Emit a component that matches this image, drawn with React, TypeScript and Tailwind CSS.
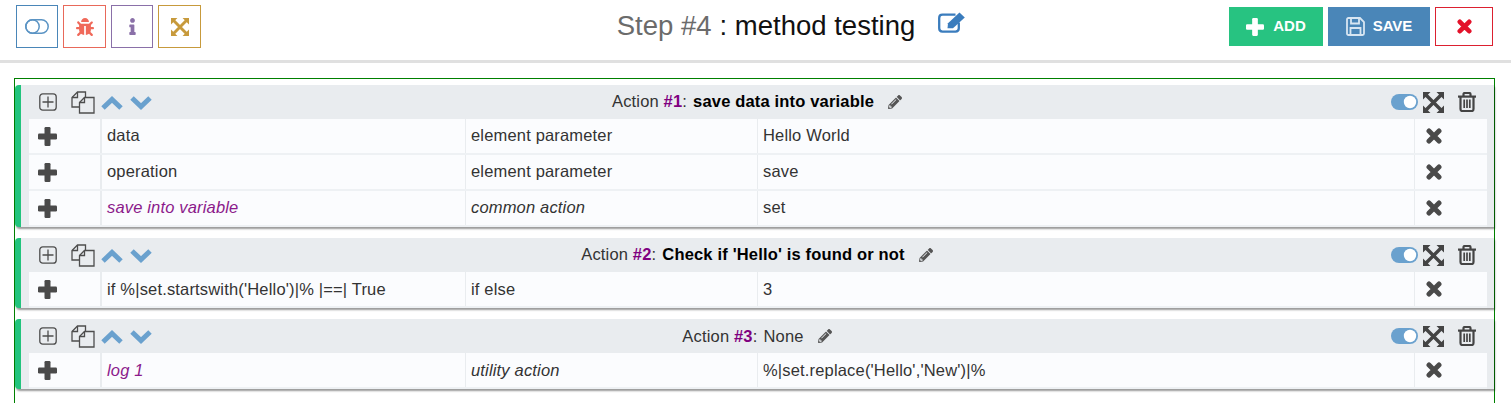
import React from 'react';
import { FaBug, FaInfo, FaPencilAlt } from 'react-icons/fa';

type Row = { name: string; kind: string; value: string; italic?: boolean };

interface ActionData {
    num: number;
    title: string;
    bold: boolean;
    rows: Row[];
}

const actions: ActionData[] = [
    {
        num: 1,
        title: 'save data into variable',
        bold: true,
        rows: [
            { name: 'data', kind: 'element parameter', value: 'Hello World' },
            { name: 'operation', kind: 'element parameter', value: 'save' },
            { name: 'save into variable', kind: 'common action', value: 'set', italic: true },
        ],
    },
    {
        num: 2,
        title: "Check if 'Hello' is found or not",
        bold: true,
        rows: [{ name: "if %|set.startswith('Hello')|% |==| True", kind: 'if else', value: '3' }],
    },
    {
        num: 3,
        title: 'None',
        bold: false,
        rows: [{ name: 'log 1', kind: 'utility action', value: "%|set.replace('Hello','New')|%", italic: true }],
    },
];

const ToggleOutline = () => (
    <svg width="24" height="15" viewBox="0 0 24 15" fill="none" stroke="#5b94c4" strokeWidth="1.5">
        <rect x="0.8" y="0.8" width="22.4" height="13.4" rx="6.7" />
        <circle cx="7.5" cy="7.5" r="6.7" />
    </svg>
);

const Toggle = () => (
    <svg width="27" height="16" viewBox="0 0 27 16">
        <rect x="0" y="0" width="27" height="16" rx="8" fill="#6aa1ce" />
        <circle cx="19" cy="8" r="6.2" fill="#fff" />
    </svg>
);

const AddBox = () => (
    <svg width="18" height="18" viewBox="0 0 18 18" fill="none" stroke="#4d4d4d" strokeWidth="1.3">
        <rect x="0.8" y="0.8" width="16.4" height="16.4" rx="3" />
        <path d="M9 3.5v11M3.5 9h11" />
    </svg>
);

const CopyDocs = () => (
    <svg width="24" height="23" viewBox="0 0 24 23" fill="none" stroke="#4d4d4d" strokeWidth="1.3">
        <path d="M14.5 6V1H6.5L1 6.5V16H8" />
        <path d="M6.5 1v5.5H1" />
        <path d="M23 6.5H13.5L8.5 11.5V22H23Z" fill="#e9ecef" />
        <path d="M13.5 6.5v5h-5" />
    </svg>
);

const Chevron = ({ up }: { up?: boolean }) => (
    <svg width="22" height="14" viewBox="0 0 22 14" fill="none" stroke="#6aa1ce" strokeWidth="5">
        <path d={up ? 'M2 12L11 3.5L20 12' : 'M2 2L11 10.5L20 2'} />
    </svg>
);

const PlusIcon = ({ size = 19, color = '#4a4a4a' }: { size?: number; color?: string }) => (
    <svg width={size} height={size} viewBox="0 0 19 19" fill={color}>
        <rect x="6.5" y="0" width="6" height="19" rx="1.2" />
        <rect x="0" y="6.5" width="19" height="6" rx="1.2" />
    </svg>
);

const CrossIcon = ({ size = 16, color = '#4a4a4a' }: { size?: number; color?: string }) => (
    <svg width={size} height={size} viewBox="0 0 16 16" stroke={color} strokeWidth="5" strokeLinecap="round">
        <path d="M3 3L13 13M13 3L3 13" />
    </svg>
);

const ExpandIcon = ({ size = 21, color = '#444' }: { size?: number; color?: string }) => (
    <svg width={size} height={size} viewBox="0 0 21 21" fill={color}>
        <path d="M0 0H7.5L0 7.5ZM21 0V7.5L13.5 0ZM0 21V13.5L7.5 21ZM21 21H13.5L21 13.5Z" />
        <path d="M3 3L18 18M18 3L3 18" stroke={color} strokeWidth="3.4" />
    </svg>
);

const TrashIcon = () => (
    <svg width="18" height="20" viewBox="0 0 18 20" fill="none" stroke="#444" strokeWidth="2.2">
        <path d="M0 4.6H18" />
        <path d="M5.5 4V2.2C5.5 1.5 6 1 6.7 1H11.3C12 1 12.5 1.5 12.5 2.2V4" />
        <path d="M2.5 4.5V17C2.5 18.2 3.2 19 4.2 19H13.8C14.8 19 15.5 18.2 15.5 17V4.5" />
        <path d="M6.2 7.5V16M9 7.5V16M11.8 7.5V16" strokeWidth="1.7" />
    </svg>
);

const SaveIcon = () => (
    <svg width="19" height="19" viewBox="0 0 19 19" fill="none" stroke="#d8e6f2" strokeWidth="1.8">
        <path d="M1 2.5C1 1.6 1.6 1 2.5 1H14L18 5V16.5C18 17.4 17.4 18 16.5 18H2.5C1.6 18 1 17.4 1 16.5Z" />
        <path d="M5 1.5V6.5H13V1.5" />
        <path d="M4.5 18V11H14.5V18" />
    </svg>
);

const EditIcon = () => (
    <svg width="28" height="22" viewBox="0 0 28 22" fill="none">
        <path d="M17.5 3.6H4.5C2.6 3.6 1.2 5 1.2 6.9V17.3C1.2 19.2 2.6 20.6 4.5 20.6H17.5C19.4 20.6 20.8 19.2 20.8 17.3V11.5" stroke="#3a7cbd" strokeWidth="2.3" />
        <path d="M9.5 17.2L10 12.3L21.5 1.6L26.8 6.4L15 17.2Z" fill="#3a7cbd" />
    </svg>
);

const TopButton = ({ className, children }: { className: string; children: React.ReactNode }) => (
    <div className={`h-[43px] border flex items-center justify-center ${className}`}>{children}</div>
);

const ActionCard = ({ action }: { action: ActionData }) => {
    // text baselines differ by a pixel between the cards in the picture
    const rowNudge = action.num === 1 ? 'pb-[1px]' : '';
    const titleNudge = action.num === 3 ? '' : 'pb-[1px]';
    return (
        <div className="rounded-l-[4px] border-l-[6px] border-[#22c47d] bg-[#e9ecef] shadow-[1px_2px_2px_rgba(0,0,0,0.4)] pr-[7px]">
            <div className="h-[34px] flex items-center">
                <div className="flex items-center ml-[18px] w-[120px] shrink-0">
                    <AddBox />
                    <span className="ml-[14px]"><CopyDocs /></span>
                    <span className="ml-[6px] mt-[1px]"><Chevron up /></span>
                    <span className="ml-[7px] mt-[1px]"><Chevron /></span>
                </div>
                <div className={`flex-1 flex items-center justify-center text-[16.5px] tracking-[0.17px] text-[#333] pr-[36px] ${titleNudge}`}>
                    <span>Action <b className="text-[#800080]">#{action.num}</b>:</span>
                    <span className={`ml-[6px] ${action.bold ? 'font-bold text-black' : ''}`}>{action.title}</span>
                    <FaPencilAlt className="ml-[14px] text-[#555]" size={14} />
                </div>
                <div className="flex items-center w-[96px] shrink-0">
                    <Toggle />
                    <span className="ml-[5px]"><ExpandIcon /></span>
                    <span className="ml-[14px]"><TrashIcon /></span>
                </div>
            </div>
            <div className="ml-[8px] bg-[#fbfcfe]">
                {action.rows.map((row, i) => (
                    <div key={i} className="h-[36px] grid grid-cols-[73px_364px_292px_657px_72px] items-stretch text-[16.5px] tracking-[0.17px] text-[#333] border-b-2 border-[#eef1f4]">
                        <div className="flex items-center pl-[9px] border-r-2 border-[#e9ecef]">
                            <PlusIcon />
                        </div>
                        <div className={`flex items-center pl-[5px] border-r border-[#e9ecef] ${rowNudge} ${row.italic ? 'italic text-[#8b1a8b]' : ''}`}>{row.name}</div>
                        <div className={`flex items-center pl-[5px] border-r border-[#e9ecef] ${rowNudge} ${row.italic ? 'italic' : ''}`}>{row.kind}</div>
                        <div className={`flex items-center pl-[5px] border-r border-[#e9ecef] ${rowNudge}`}>{row.value}</div>
                        <div className="flex items-center pl-[11px]">
                            <CrossIcon />
                        </div>
                    </div>
                ))}
            </div>
        </div>
    );
};

export default function App() {
    return (
        <div className="w-[1511px] h-[403px] overflow-hidden bg-white font-['Liberation_Sans',Arial,sans-serif]">
            <header className="h-[63px] border-b-[3px] border-[#e0e0e0] flex items-start">
                <div className="flex items-center gap-[5px] pl-[16px] pt-[5px] w-[385px]">
                    <TopButton className="w-[42px] border-[#4a86b8]"><ToggleOutline /></TopButton>
                    <TopButton className="w-[43px] border-[#e8695a]"><FaBug className="text-[#f0695a]" size={18} /></TopButton>
                    <TopButton className="w-[42px] border-[#8a70a8]"><FaInfo className="text-[#8a70a8]" size={17} /></TopButton>
                    <TopButton className="w-[43px] border-[#c79a3c]"><ExpandIcon size={18} color="#c79a3c" /></TopButton>
                </div>
                <div className="flex-1 flex items-center justify-center h-[52px] text-[27.5px] pr-[31px]">
                    <span className="text-[#6b6b6b]">Step #4</span>
                    <span className="ml-[8px] text-[#111]">: method testing</span>
                    <span className="ml-[23px] mb-[9px]"><EditIcon /></span>
                </div>
                <div className="flex items-center pt-[7px] pr-[18px] gap-[5px]">
                    <div className="w-[94px] h-[39px] bg-[#27c381] text-white font-bold text-[15px] flex items-center justify-center gap-[9px]">
                        <PlusIcon size={18} color="#ffffff" />ADD
                    </div>
                    <div className="w-[102px] h-[39px] bg-[#4a86b8] text-white font-bold text-[15px] flex items-center justify-center gap-[8px]">
                        <SaveIcon />SAVE
                    </div>
                    <div className="w-[58px] h-[39px] border border-[#dc2030] flex items-center justify-center">
                        <CrossIcon size={15} color="#e3122a" />
                    </div>
                </div>
            </header>
            <main className="ml-[14px] mr-[16px] mt-[15px] h-[340px] border border-[#008000] border-b-0 pt-[6px] flex flex-col gap-[11px]">
                {actions.map((a) => <ActionCard key={a.num} action={a} />)}
            </main>
        </div>
    );
}
